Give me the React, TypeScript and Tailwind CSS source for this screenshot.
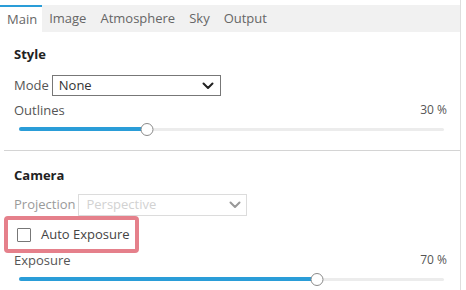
import React from "react";

const TABS = ["Main", "Image", "Atmosphere", "Sky", "Output"];

function Chevron({ color }: { color: string }) {
  return (
    <svg width="12" height="8" viewBox="0 0 12 8" fill="none">
      <path d="M1.5 1.5L6 6L10.5 1.5" stroke={color} strokeWidth="2" strokeLinecap="round" strokeLinejoin="round" />
    </svg>
  );
}

function Slider({ value }: { value: number }) {
  return (
    <div className="relative ml-[19px] mr-[16px] h-[14px] flex items-center">
      <div className="w-full h-[3px] rounded-full bg-[#ececec]" />
      <div className="absolute left-0 h-[4px] rounded-full bg-[#2a9dd8]" style={{ width: `${value}%` }} />
      <div
        className="absolute w-[13px] h-[13px] rounded-full bg-white border border-[#8a8a8a] -translate-x-1/2"
        style={{ left: `${value}%` }}
      />
    </div>
  );
}

export default function App() {
  return (
    <div
      className="w-[466px] h-[290px] bg-white overflow-hidden text-[13px] text-[#555]"
      style={{ fontFamily: '"Open Sans", "Liberation Sans", sans-serif' }}
    >
      <div className="w-[461px] h-full border-r border-[#dedede] pt-[5px]">
        {/* Tabs */}
        <div className="flex h-[27px] bg-[#f1f1f1] items-stretch">
          {TABS.map((t, i) => (
            <div
              key={t}
              className={
                i === 0
                  ? "bg-white border-t-2 border-[#2a9dd8] pl-[7px] pr-[5px] flex items-center text-[#666]"
                  : "px-[7px] flex items-center text-[#666]"
              }
            >
              {t}
            </div>
          ))}
        </div>

        {/* Style */}
        <div className="px-[14px]">
          <div className="mt-[13px] font-bold text-[#222] leading-[18px]">Style</div>
          <div className="mt-[12px] flex items-center gap-[3px]">
            <span>Mode</span>
            <div className="w-[169px] h-[21px] border border-[#777] flex items-center justify-between pl-[6px] pr-[6px] text-[#333]">
              <span>None</span>
              <Chevron color="#222" />
            </div>
          </div>
          <div className="mt-[5px] flex justify-between leading-[18px]">
            <span>Outlines</span>
            <span className="mr-[-1px] text-[12px]">30 %</span>
          </div>
        </div>
        <div className="mt-[3px]">
          <Slider value={30} />
        </div>
        <div className="mt-[14px] ml-[4px] border-t border-[#d4d4d4]" />

        {/* Camera */}
        <div className="px-[14px]">
          <div className="mt-[15px] font-bold text-[#222] leading-[18px]">Camera</div>
          <div className="mt-[10px] flex items-center gap-[3px]">
            <span className="text-[#9a9a9a]">Projection</span>
            <div className="w-[169px] h-[22px] border border-[#dcdcdc] flex items-center justify-between pl-[7px] pr-[5px] text-[#d2d2d2]">
              <span>Perspective</span>
              <Chevron color="#999" />
            </div>
          </div>
        </div>
        <div className="ml-[4px] mt-[0px] w-[135px] h-[37px] border-4 border-[#e5808b] rounded-[4px] flex items-center pl-[9px] gap-[10px]">
          <div className="w-[14px] h-[14px] border border-[#777] rounded-[1px] bg-white" />
          <span className="text-[#444]">Auto Exposure</span>
        </div>
        <div className="px-[14px] flex justify-between leading-[18px] mt-[-2px]">
          <span>Exposure</span>
          <span className="mr-[-1px] text-[12px]">70 %</span>
        </div>
        <div className="mt-[3px]">
          <Slider value={70} />
        </div>
      </div>
    </div>
  );
}
